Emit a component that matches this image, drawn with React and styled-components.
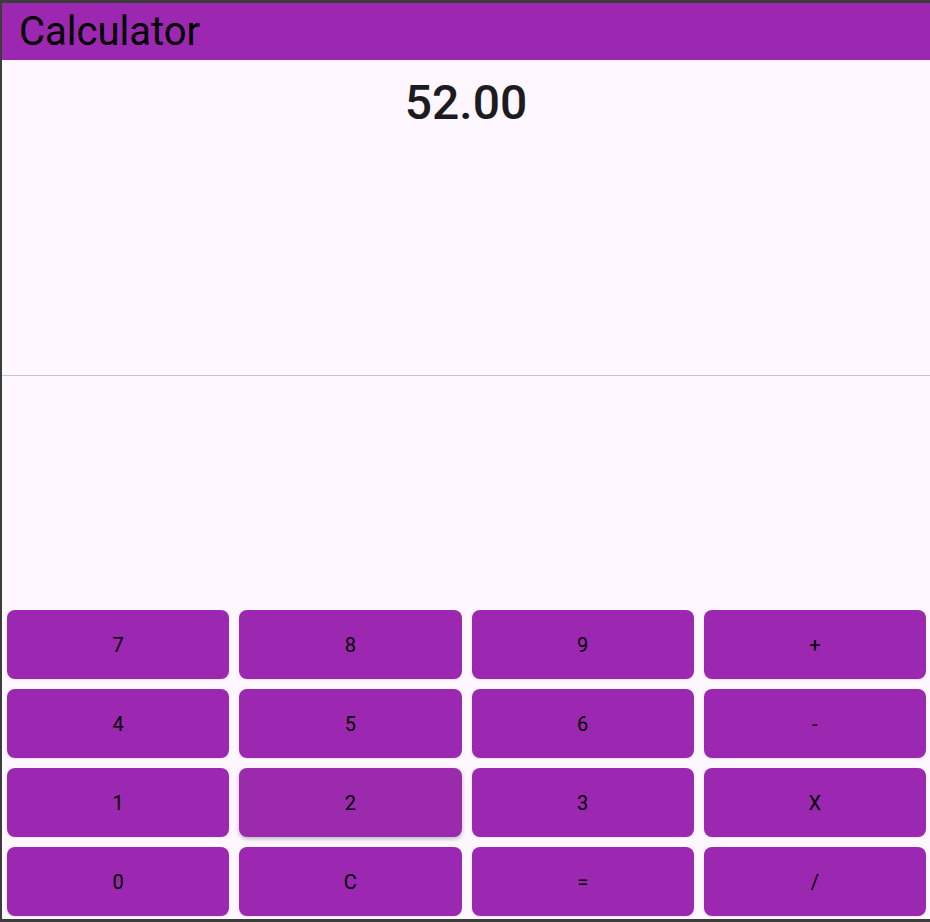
import React from "react";
import styled, { createGlobalStyle } from "styled-components";

const GlobalStyle = createGlobalStyle`
	html, body {
		margin: 0;
		padding: 0;
		background: #3c3c3c;
	}
	body {
		font-family: Roboto, "Noto Sans", sans-serif;
	}
`;

const Frame = styled.div`
	box-sizing: border-box;
	height: 922px;
	padding: 3px 0 3px 2px;
	display: flex;
`;

const Screen = styled.div`
	flex: 1;
	display: flex;
	flex-direction: column;
	background: #fef7ff;
`;

const TopBar = styled.header`
	height: 57px;
	flex-shrink: 0;
	display: flex;
	align-items: center;
	padding-left: 17px;
	background: #9c27b0;
	color: #000;
	font-size: 40px;
`;

const Display = styled.div`
	height: 316px;
	flex-shrink: 0;
	box-sizing: border-box;
	padding-top: 14px;
	text-align: center;
	color: #1c1b1f;
	font-size: 48px;
	font-weight: 500;
	border-bottom: 1px solid #cac4d0;
`;

const Spacer = styled.div`
	flex: 1;
`;

const Keypad = styled.div`
	display: grid;
	grid-template-columns: repeat(4, 1fr);
	gap: 10px;
	padding: 0 4px 3px 5px;
`;

const Key = styled.button`
	height: 69px;
	border: none;
	border-radius: 8px;
	background: ${(p) => (p.$hover ? "#9b2aad" : "#9c27b0")};
	box-shadow: ${(p) =>
		p.$hover ? "0 2px 4px rgba(0, 0, 0, 0.25)" : "0 1px 1px rgba(0, 0, 0, 0.08)"};
	color: #000;
	font-family: Roboto, sans-serif;
	font-size: 20px;
	cursor: pointer;
`;

const keys = ["7", "8", "9", "+", "4", "5", "6", "-", "1", "2", "3", "X", "0", "C", "=", "/"];

export default function App() {
	return (
		<>
			<GlobalStyle />
			<Frame>
				<Screen>
					<TopBar>Calculator</TopBar>
					<Display>52.00</Display>
					<Spacer />
					<Keypad>
						{keys.map((k) => (
							<Key key={k} $hover={k === "2"}>
								{k}
							</Key>
						))}
					</Keypad>
				</Screen>
			</Frame>
		</>
	);
}
